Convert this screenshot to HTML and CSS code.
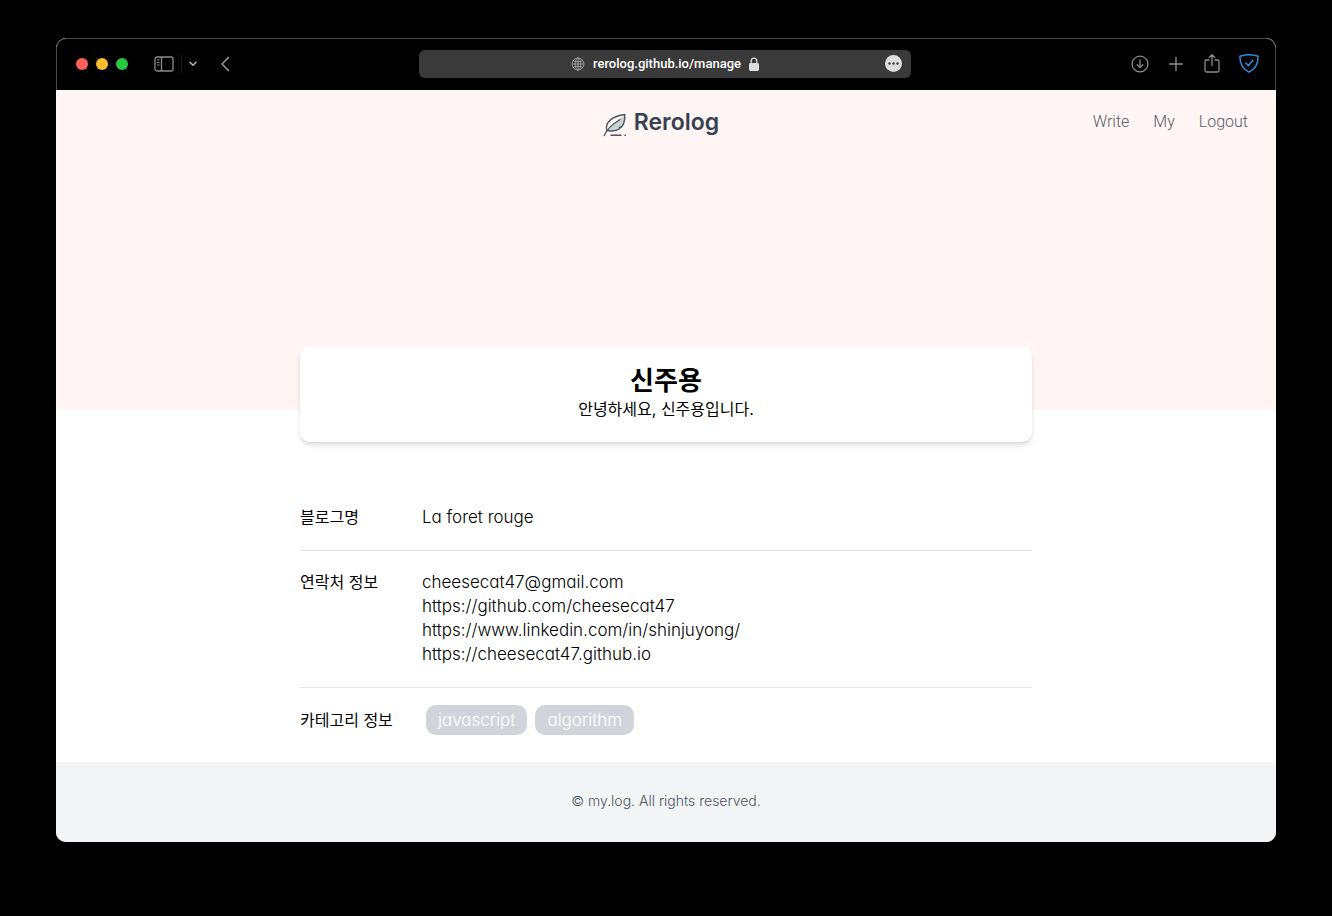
FILE: index.html
```html
<!DOCTYPE html>
<html lang="ko">
<head>
<meta charset="utf-8">
<meta name="viewport" content="width=device-width, initial-scale=1">
<title>Rerolog</title>
<link rel="stylesheet" href="styles.css">
</head>
<body>
<div class="window">
  <div class="toolbar">
    <div class="tools-left">
      <span class="lights"><i class="light red"></i><i class="light yellow"></i><i class="light green"></i></span>
      <button class="tool" type="button" aria-label="Sidebar">
        <svg width="20" height="16" viewBox="0 0 20 16" fill="none" stroke="currentColor" stroke-width="1.3"><rect x="1" y="1" width="18" height="14" rx="2"/><path d="M7.5 1v14"/><path d="M3 4h2.500M3 6.500h2.500M3 9h2.500" stroke-width="1"/></svg>
      </button>
      <span class="split"></span>
      <button class="tool chevron" type="button" aria-label="Tab groups">
        <svg width="8" height="6" viewBox="0 0 8 6" fill="none" stroke="currentColor" stroke-width="1.5" stroke-linecap="round" stroke-linejoin="round"><path d="M1 1.200l3 3 3-3"/></svg>
      </button>
      <button class="tool back" type="button" aria-label="Back">
        <svg width="10" height="16" viewBox="0 0 10 16" fill="none" stroke="currentColor" stroke-width="1.5" stroke-linecap="round" stroke-linejoin="round"><path d="M8.500 1.500L2 8l6.500 6.500"/></svg>
      </button>
    </div>
    <div class="address">
      <svg width="14" height="14" viewBox="0 0 14 14" fill="none" stroke="#a2a2a2" stroke-width="0.9"><circle cx="7" cy="7" r="6"/><ellipse cx="7" cy="7" rx="2.800" ry="6"/><path d="M7 1v12M1 7h12M2 3.800c3 1.200 7 1.200 10 0M2 10.200c3-1.200 7-1.200 10 0"/></svg>
      <span class="url">rerolog.github.io/manage</span>
      <svg width="10" height="14" viewBox="0 0 10 14"><rect x="0" y="6" width="10" height="8" rx="1.400" fill="#dedede"/><path d="M2.200 6.500V4a2.800 2.900 0 0 1 5.600 0v2.500" fill="none" stroke="#dedede" stroke-width="1.300"/></svg>
      <button class="more" type="button" aria-label="Page menu">
        <svg width="17" height="17" viewBox="0 0 17 17"><circle cx="8.500" cy="8.500" r="8.500" fill="#dedede"/><g fill="#3a3a3a"><circle cx="4.500" cy="8.500" r="1.200"/><circle cx="8.500" cy="8.500" r="1.200"/><circle cx="12.500" cy="8.500" r="1.200"/></g></svg>
      </button>
    </div>
    <div class="tools-right">
      <button class="tool" type="button" aria-label="Downloads">
        <svg width="18" height="18" viewBox="0 0 18 18" fill="none" stroke="currentColor" stroke-width="1.300" stroke-linecap="round" stroke-linejoin="round"><circle cx="9" cy="9" r="7.900"/><path d="M9 5v7.500M6.200 9.800L9 12.600l2.800-2.800"/></svg>
      </button>
      <button class="tool" type="button" aria-label="New tab">
        <svg width="18" height="18" viewBox="0 0 18 18" fill="none" stroke="currentColor" stroke-width="1.400" stroke-linecap="round"><path d="M9 2.500v13M2.500 9h13"/></svg>
      </button>
      <button class="tool" type="button" aria-label="Share">
        <svg width="18" height="20" viewBox="0 0 18 20" fill="none" stroke="currentColor" stroke-width="1.300" stroke-linecap="round" stroke-linejoin="round"><path d="M6 6H3.500A1.500 1.500 0 0 0 2 7.500v9A1.500 1.500 0 0 0 3.500 18h11a1.500 1.500 0 0 0 1.500-1.500v-9A1.500 1.500 0 0 0 14.500 6H12M9 11.500V1M6.200 3.500L9 .8l2.800 2.700"/></svg>
      </button>
      <button class="tool shield" type="button" aria-label="Protection">
        <svg width="20" height="20" viewBox="0 0 20 20" fill="none" stroke="currentColor" stroke-width="1.500" stroke-linecap="round" stroke-linejoin="round"><path d="M1 2.200C6.500.400 13.500.400 19 2.200c.400 7-2.500 12.600-9 16C3.500 14.800.600 9.200 1 2.200z"/><path d="M6.800 9l2.700 2.600 4.300-5"/></svg>
      </button>
    </div>
  </div>

  <header class="hero">
    <a class="brand" href="#">
      <svg width="24" height="24" viewBox="0 0 24 24" fill="none" stroke="#4b545c" stroke-width="1.400" stroke-linecap="round" stroke-linejoin="round"><path d="M4.500 17.500L21.500 2c.500 5-.500 10-3.500 12.500-4 3.500-9 3.500-13.500 3z" fill="#c9d3d5" stroke="none"/><path d="M1.300 22.500C3.500 17 9 11.500 17 6.500"/><path d="M3.800 17.500C1.500 9 10 3 21.800 1.500c.200 5-.500 9.500-3.300 12.500l-2 .500.500 1c-3 2.200-7.500 3-13.200 2"/><path d="M8 22.300h10M22 22.300h.400"/></svg>
      <span>Rerolog</span>
    </a>
    <nav class="menu">
      <a href="#">Write</a>
      <a href="#">My</a>
      <a href="#">Logout</a>
    </nav>
  </header>

  <main class="content">
    <section class="card">
      <h1>신주용</h1>
      <p>안녕하세요, 신주용입니다.</p>
    </section>
    <dl class="info">
      <div class="row">
        <dt>블로그명</dt>
        <dd>La foret rouge</dd>
      </div>
      <div class="row">
        <dt>연락처 정보</dt>
        <dd>
          <div>cheesecat47@gmail.com</div>
          <div>https://github.com/cheesecat47</div>
          <div>https://www.linkedin.com/in/shinjuyong/</div>
          <div>https://cheesecat47.github.io</div>
        </dd>
      </div>
      <div class="row categories">
        <dt>카테고리 정보</dt>
        <dd class="tags"><span class="tag">javascript</span><span class="tag">algorithm</span></dd>
      </div>
    </dl>
  </main>

  <footer class="footer">© my.log. All rights reserved.</footer>
</div>
</body>
</html>
```
FILE: styles.css
```css
* { box-sizing: border-box; }

body {
  margin: 0;
  padding: 38px 56px;
  background: #000;
  color: #000;
  font-family: Inter, "Noto Sans CJK KR", sans-serif;
  font-feature-settings: "cv11";
  font-size: 16px;
  font-weight: 300;
  line-height: 24px;
}

a { color: inherit; text-decoration: none; }
h1, p, dl, dd { margin: 0; }
svg { display: block; flex: none; }

button {
  padding: 0;
  border: 0;
  background: none;
  color: inherit;
}

.window {
  border-radius: 10px;
  overflow: hidden;
  background: #fff;
}

.toolbar {
  display: grid;
  grid-template-columns: 1fr minmax(200px, 492px) 1fr;
  align-items: center;
  height: 52px;
  padding: 0 18px 2px 16px;
  border: 1px solid #484848;
  border-bottom: 0;
  border-radius: 10px 10px 0 0;
  background: #000;
  color: #8c8c8c;
}

.tools-left, .tools-right { display: flex; align-items: center; }
.tools-right { justify-content: flex-end; gap: 18px; margin-right: -2px; }
.lights { display: flex; gap: 8px; margin: 0 26px 0 3px; }
.light { width: 12px; height: 12px; border-radius: 50%; }
.red { background: #ff5f57; }
.yellow { background: #febc2e; }
.green { background: #28c840; }
.split { width: 1px; height: 18px; margin: 0 7px; background: #1c1c1c; }
.chevron { color: #b4b4b4; }
.back { margin-left: 23px; color: #9a9a9a; }
.shield { color: #2f8fdc; }

.address {
  position: relative;
  display: flex;
  align-items: center;
  justify-content: center;
  gap: 8px;
  height: 28px;
  border-radius: 6px;
  background: #3a3a3a;
}

.url {
  color: #fff;
  font-family: Roboto, sans-serif;
  font-size: 13px;
  font-weight: 500;
}

.more { position: absolute; right: 9px; }

.hero {
  display: grid;
  grid-template-columns: 1fr auto 1fr;
  align-items: start;
  height: 320px;
  padding: 20px 28px;
  background: #fff5f4;
}

.brand {
  grid-column: 2;
  display: flex;
  align-items: flex-start;
  gap: 7px;
  margin-right: 10px;
  color: #374151;
  font-size: 23px;
  font-weight: 600;
}

.brand svg { margin-top: 3px; }

.menu {
  display: flex;
  justify-content: flex-end;
  gap: 24px;
  color: #5b5c66;
  font-family: Roboto, sans-serif;
  font-size: 16px;
}

.content { width: 60%; margin: 0 auto; }

.card {
  position: relative;
  margin-top: -64px;
  padding: 19px 20px 21px;
  border-radius: 10px;
  background: #fff;
  box-shadow: 0 4px 6px -1px rgb(0 0 0 / 12%), 0 2px 4px -2px rgb(0 0 0 / 12%);
  font-weight: 400;
  text-align: center;
}

.card h1 {
  font-size: 26px;
  font-weight: 700;
  line-height: 32px;
}

.info { margin-top: 44px; }

.row {
  display: grid;
  grid-template-columns: 1fr 5fr;
  padding: 19px 0 21px;
  border-bottom: 1px solid #e5e7eb;
}

.row dt { font-weight: 400; }
.row dd { font-size: 17px; }

.categories {
  align-items: center;
  padding: 17px 0 27px;
  border-bottom: 0;
}

.tags { display: flex; gap: 8px; padding-left: 4px; }

.tag {
  padding: 3px 12px;
  border-radius: 10px;
  background: #d1d5db;
  color: #fff;
}

.footer {
  padding: 27px 28px 29px;
  background: #f3f4f6;
  color: #4b5563;
  font-size: 14px;
  text-align: center;
}
```
